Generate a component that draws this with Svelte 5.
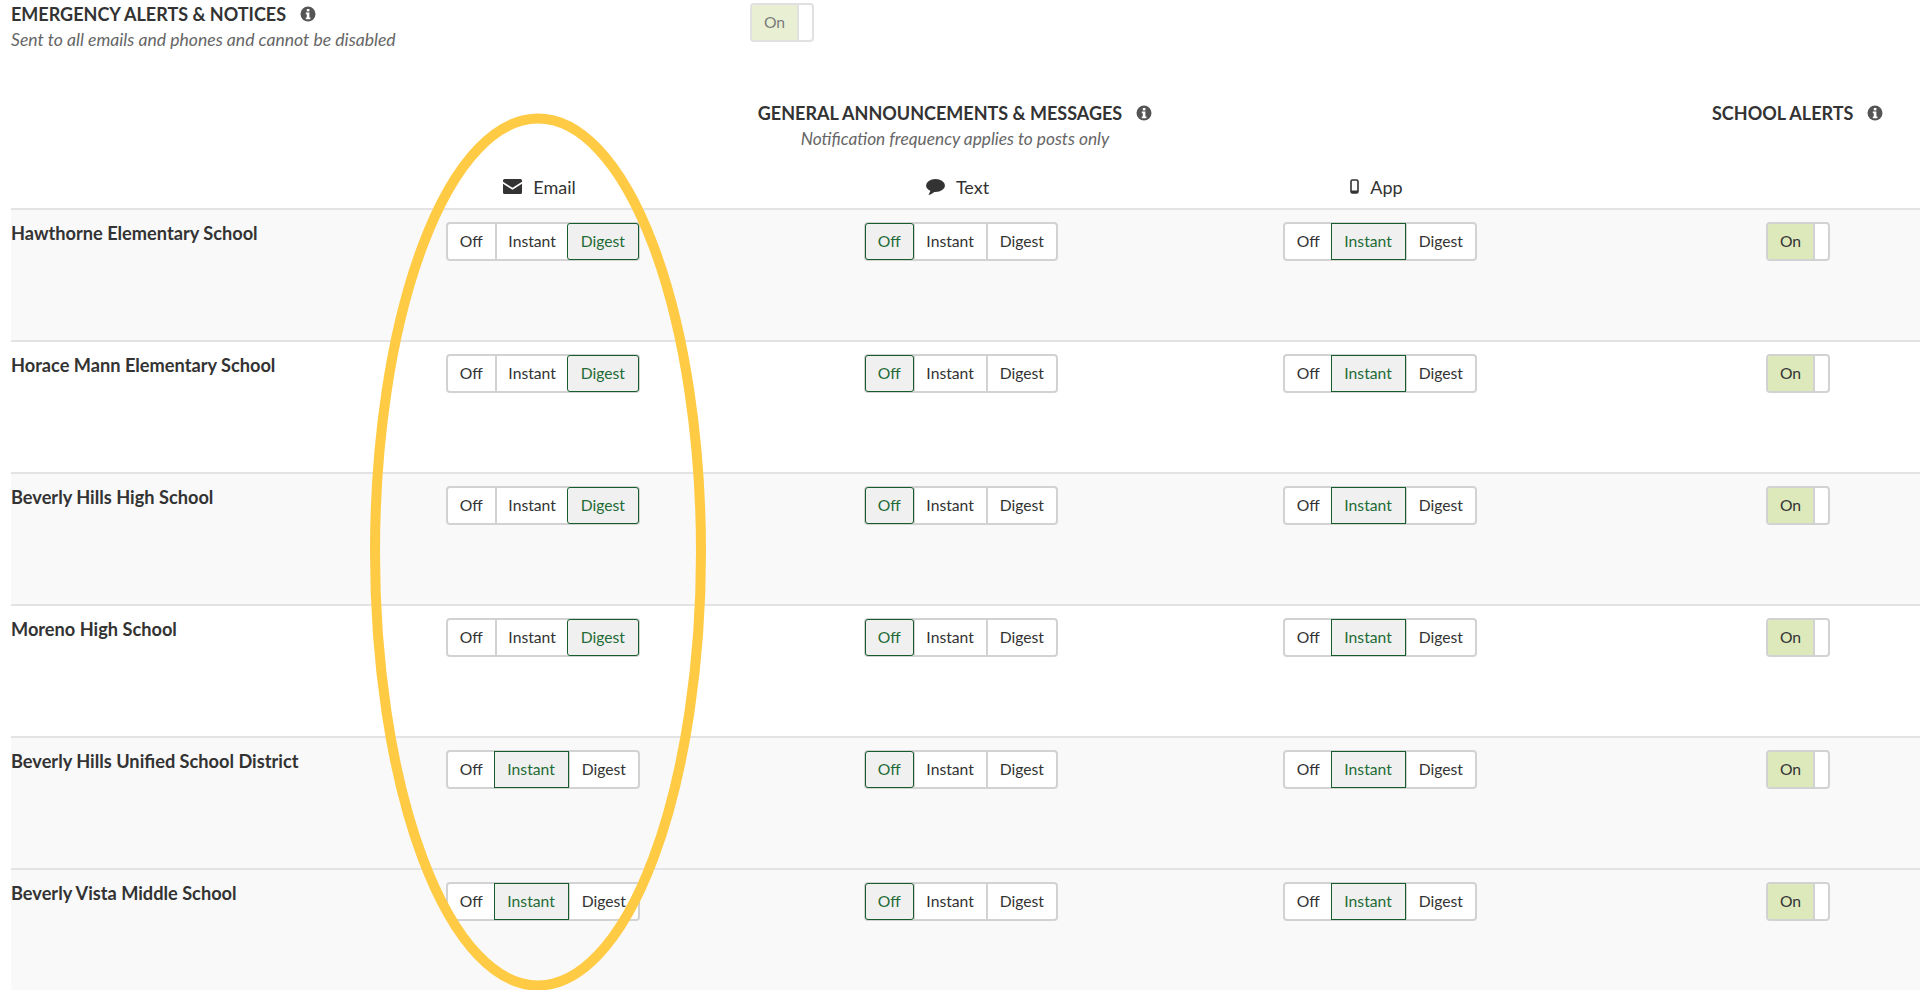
<script>
  const schools = [
    { name: 'Hawthorne Elementary School', email: 'Digest', tone: 'grey' },
    { name: 'Horace Mann Elementary School', email: 'Digest', tone: 'white' },
    { name: 'Beverly Hills High School', email: 'Digest', tone: 'grey' },
    { name: 'Moreno High School', email: 'Digest', tone: 'white' },
    { name: 'Beverly Hills Unified School District', email: 'Instant', tone: 'grey' },
    { name: 'Beverly Vista Middle School', email: 'Instant', tone: 'grey' }
  ];
  const options = ['Off', 'Instant', 'Digest'];
</script>

{#snippet info()}
  <svg class="info" viewBox="0 0 16 16" aria-hidden="true">
    <circle cx="8" cy="8" r="7.5" fill="#555" />
    <rect x="6.8" y="3" width="2.6" height="2.4" fill="#fff" />
    <path d="M5.8 6.6h3.6v5h1v1.6H5.8v-1.6h1v-3.400h-1z" fill="#fff" />
  </svg>
{/snippet}

{#snippet segments(selected)}
  <div class="segments">
    {#each options as option}
      <span class="seg {option.toLowerCase()}" class:active={option === selected}>{option}</span>
    {/each}
  </div>
{/snippet}

<div class="page">
  <section class="emergency">
    <div>
      <h2>EMERGENCY ALERTS &amp; NOTICES {@render info()}</h2>
      <p>Sent to all emails and phones and cannot be disabled</p>
    </div>
    <div class="toggle faded"><span>On</span></div>
  </section>

  <section class="heads">
    <div></div>
    <div class="general">
      <h2>GENERAL ANNOUNCEMENTS &amp; MESSAGES {@render info()}</h2>
      <p>Notification frequency applies to posts only</p>
    </div>
    <div></div>
    <h2 class="alerts">SCHOOL ALERTS {@render info()}</h2>
  </section>

  <section class="channels">
    <div></div>
    <div class="channel">
      <svg width="19" height="15" viewBox="0 0 19 15" aria-hidden="true">
        <path d="M1.500 0h16A1.500 1.500 0 0 1 19 1.500v1.300l-9.500 6-9.500-6V1.500A1.500 1.500 0 0 1 1.500 0z" fill="#333" />
        <path d="M0 4.800l9.500 6 9.500-6v8.700a1.500 1.500 0 0 1-1.500 1.500h-16A1.500 1.500 0 0 1 0 13.500z" fill="#333" />
      </svg>
      Email
    </div>
    <div class="channel">
      <svg width="19" height="16" viewBox="0 0 19 16" aria-hidden="true">
        <ellipse cx="9.500" cy="6.500" rx="9.500" ry="6.500" fill="#333" />
        <path d="M5 10.500L2.500 16c2.500-.6 5-2 6.500-3.500z" fill="#333" />
      </svg>
      Text
    </div>
    <div class="channel">
      <svg width="9" height="15" viewBox="0 0 9 15" aria-hidden="true">
        <rect x="1" y="1" width="7" height="13" rx="1.500" fill="none" stroke="#333" stroke-width="1.600" />
        <rect x="1" y="11.500" width="7" height="2.500" fill="#333" />
      </svg>
      App
    </div>
    <div></div>
  </section>

  {#each schools as school}
    <section class="row {school.tone}">
      <div class="name">{school.name}</div>
      {@render segments(school.email)}
      {@render segments('Off')}
      {@render segments('Instant')}
      <div class="toggle"><span>On</span></div>
    </section>
  {/each}

  <svg class="circle" width="300" height="900" viewBox="0 0 300 900" aria-hidden="true">
    <ellipse cx="150" cy="451" rx="163" ry="433.500" fill="none" stroke="#ffcb45" stroke-width="10" />
  </svg>
</div>

<style>
  :global(body) {
    margin: 0;
    background: #fff;
  }
  .page {
    position: relative;
    height: 990px;
    overflow: hidden;
    padding-left: 11px;
    box-sizing: border-box;
    font-family: Lato, "Open Sans", sans-serif;
    color: #333;
  }
  h2 {
    margin: 0;
    font-size: 18px;
    line-height: 22px;
    font-weight: 700;
    display: flex;
    align-items: center;
    gap: 14px;
    white-space: nowrap;
  }
  p {
    margin: 5px 0 0;
    font-size: 17.300px;
    line-height: 20px;
    font-style: italic;
    color: #666;
  }
  .emergency p {
    font-size: 17.600px;
  }
  .info {
    width: 16px;
    height: 16px;
    flex: none;
  }
  .emergency {
    display: grid;
    grid-template-columns: 739px 1fr;
    height: 102px;
    padding-top: 3px;
    box-sizing: border-box;
  }
  .heads,
  .channels,
  .row {
    display: grid;
  }
  .heads {
    grid-template-columns: 436px 1016px 249px 1fr;
    height: 70px;
  }
  .alerts {
    align-self: start;
  }
  .general {
    display: flex;
    flex-direction: column;
    align-items: center;
  }
  .channels {
    grid-template-columns: 435px 418px 419px 1fr;
    height: 36px;
    align-items: center;
  }
  .channel {
    width: 187px;
    display: flex;
    justify-content: center;
    align-items: center;
    gap: 11px;
    font-size: 18px;
  }
  .row {
    grid-template-columns: 435px 418px 419px 483px 1fr;
    height: 132px;
    box-sizing: border-box;
    border-top: 2px solid #e3e3e3;
    padding-top: 12px;
    align-items: start;
  }
  .row.grey {
    background: #f9f9f9;
  }
  .name {
    font-size: 18.200px;
    font-weight: 700;
    line-height: 22px;
  }
  .segments {
    display: flex;
    width: 194px;
    height: 39px;
    box-sizing: border-box;
    background: #fff;
    border: 2px solid #d2d2d2;
    border-radius: 4px;
    font-size: 15.700px;
  }
  .seg {
    display: flex;
    align-items: center;
    justify-content: center;
    box-sizing: border-box;
    position: relative;
    padding-bottom: 2px;
  }
  .off {
    width: 47px;
  }
  .instant {
    width: 74px;
    border-left: 2px solid #d2d2d2;
  }
  .digest {
    width: 71px;
    border-left: 2px solid #d2d2d2;
  }
  .seg.active {
    color: #1f6b36;
    background: #f0f0f0;
    outline: 1.500px solid #165c2c;
    border-left: 0;
    z-index: 1;
  }
  .off.active,
  .digest.active {
    border-radius: 2px;
  }
  .toggle {
    width: 64px;
    height: 39px;
    box-sizing: border-box;
    background: #fff;
    border: 2px solid #d2d2d2;
    border-radius: 4px;
    font-size: 15.700px;
    display: flex;
  }
  .toggle span {
    width: 47px;
    background: #dde8bb;
    display: flex;
    align-items: center;
    justify-content: center;
    padding-bottom: 2px;
    box-sizing: border-box;
    border-right: 2px solid #d2d2d2;
    border-radius: 2px 0 0 2px;
  }
  .toggle.faded {
    opacity: 0.65;
  }
  .circle {
    position: absolute;
    left: 388px;
    top: 101px;
    overflow: visible;
    pointer-events: none;
  }
</style>
